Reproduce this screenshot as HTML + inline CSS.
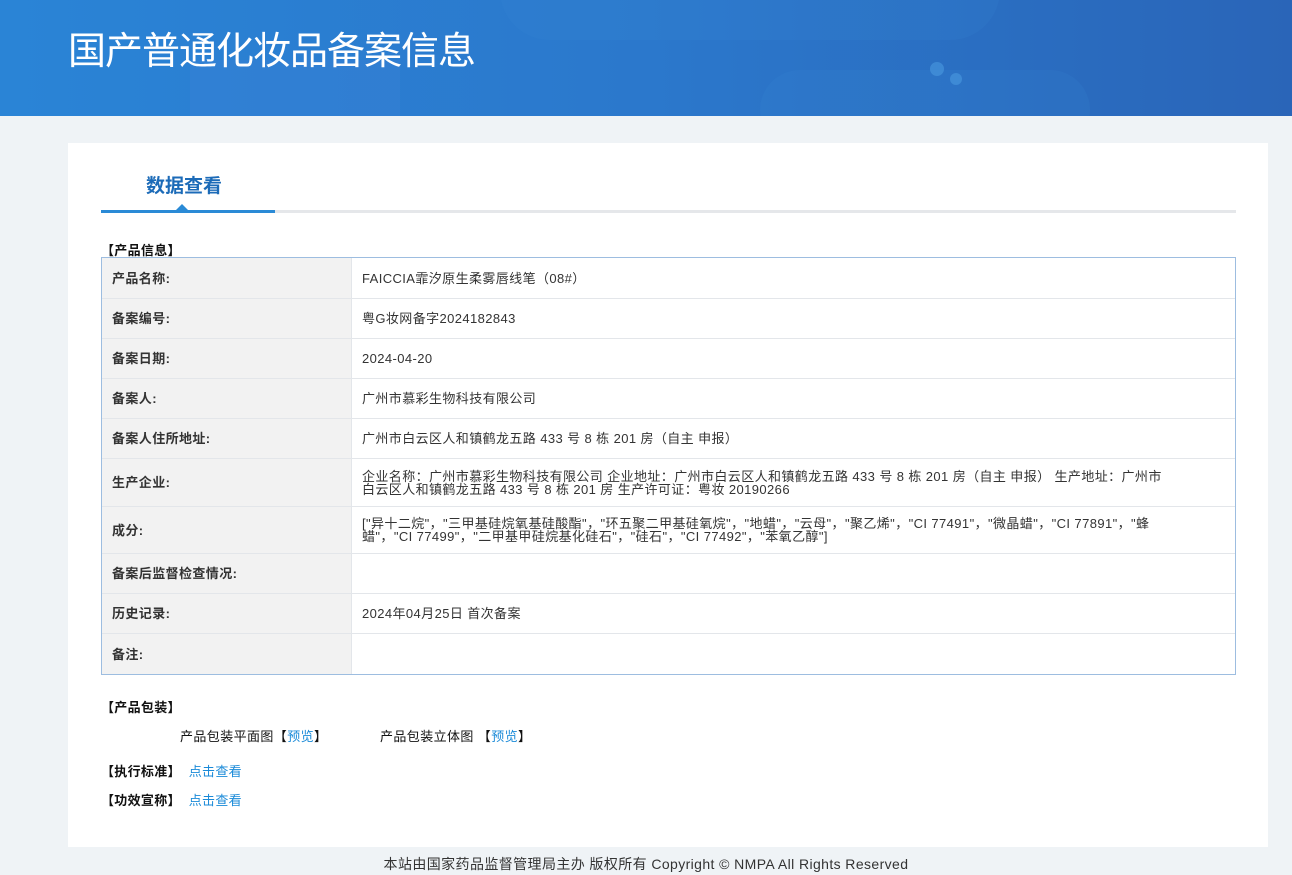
<!DOCTYPE html>
<html><head><meta charset="utf-8"><style>
*{margin:0;padding:0;box-sizing:border-box}
body{width:1292px;height:875px;background:#eff3f6;font-family:"Liberation Sans","Noto Sans CJK SC",sans-serif;font-size:13px;color:#333;position:relative;overflow:hidden}
.ban{position:absolute;left:0;top:0;width:1292px;height:116px;background:linear-gradient(90deg,#2a84d6 0%,#2b78cc 50%,#2a65b8 100%);overflow:hidden}
.ban h1{position:absolute;left:68px;top:20px;font-size:38px;font-weight:normal;color:#fff;font-family:"Noto Sans CJK SC",sans-serif;letter-spacing:-1px}
.card{position:absolute;left:68px;top:143px;width:1200px;height:704px;background:#fff}
.tab{position:absolute;left:78px;top:28px;font-size:19px;font-weight:bold;color:#1c6bb8}
.line{position:absolute;left:33px;top:67px;width:1135px;height:3px;background:#e5e7ea}
.line b{position:absolute;left:0;top:0;width:174px;height:3px;background:#2a8ad6}
.tri{position:absolute;left:108px;top:61px;width:0;height:0;border-left:6px solid transparent;border-right:6px solid transparent;border-bottom:6px solid #2a8ad6}
.sec{position:absolute;font-weight:bold;color:#111;font-size:13px;letter-spacing:.3px}
table{position:absolute;left:33px;top:114px;width:1135px;border-collapse:separate;border-spacing:0;border:1px solid #9dbde0}
td{border-bottom:1px solid #e3e6ea;padding:0 10px;font-size:13px;line-height:13px;letter-spacing:.4px}
tr:last-child td{border-bottom:none}
td.l{width:250px;background:#f2f2f2;font-weight:bold;color:#333;border-right:1px solid #e3e6ea}
a{color:#1a8ad8;text-decoration:none}
.foot{position:absolute;top:854px;width:1292px;text-align:center;font-size:14px;color:#333;letter-spacing:.4px}
.t{position:absolute;color:#111;letter-spacing:.4px}
</style></head><body>
<div class="ban">
<div style="position:absolute;left:190px;top:60px;width:210px;height:80px;background:#3b82d8;opacity:.35"></div>
<div style="position:absolute;left:500px;top:-60px;width:500px;height:100px;border-radius:50px;background:#3a8ad8;opacity:.15"></div>
<div style="position:absolute;left:760px;top:70px;width:330px;height:80px;border-radius:40px;background:#3a8ad8;opacity:.15"></div>
<div style="position:absolute;left:930px;top:62px;width:14px;height:14px;border-radius:7px;background:#4a9ae0;opacity:.6"></div>
<div style="position:absolute;left:950px;top:73px;width:12px;height:12px;border-radius:6px;background:#4a9ae0;opacity:.6"></div>
<h1>国产普通化妆品备案信息</h1></div>
<div class="card">
<div class="tab">数据查看</div>
<div class="tri"></div>
<div class="line"><b></b></div>
<div class="sec" style="left:33px;top:97px">【产品信息】</div>
<table>
<tr style="height:41px"><td class="l">产品名称:</td><td>FAICCIA霏汐原生柔雾唇线笔（08#）</td></tr>
<tr style="height:40px"><td class="l">备案编号:</td><td>粤G妆网备字2024182843</td></tr>
<tr style="height:40px"><td class="l">备案日期:</td><td>2024-04-20</td></tr>
<tr style="height:40px"><td class="l">备案人:</td><td>广州市慕彩生物科技有限公司</td></tr>
<tr style="height:40px"><td class="l">备案人住所地址:</td><td>广州市白云区人和镇鹤龙五路 433 号 8 栋 201 房（自主 申报）</td></tr>
<tr style="height:48px"><td class="l">生产企业:</td><td style="padding-right:60px">企业名称：广州市慕彩生物科技有限公司 企业地址：广州市白云区人和镇鹤龙五路 433 号 8 栋 201 房（自主 申报） 生产地址：广州市白云区人和镇鹤龙五路 433 号 8 栋 201 房 生产许可证：粤妆 20190266</td></tr>
<tr style="height:47px"><td class="l">成分:</td><td style="padding-right:60px">["异十二烷"，"三甲基硅烷氧基硅酸酯"，"环五聚二甲基硅氧烷"，"地蜡"，"云母"，"聚乙烯"，"CI 77491"，"微晶蜡"，"CI 77891"，"蜂蜡"，"CI 77499"，"二甲基甲硅烷基化硅石"，"硅石"，"CI 77492"，"苯氧乙醇"]</td></tr>
<tr style="height:40px"><td class="l">备案后监督检查情况:</td><td></td></tr>
<tr style="height:40px"><td class="l">历史记录:</td><td>2024年04月25日 首次备案</td></tr>
<tr style="height:40px"><td class="l">备注:</td><td></td></tr>
</table>
<div class="sec" style="left:33px;top:554px">【产品包装】</div>
<div class="t" style="left:112px;top:583px">产品包装平面图【<a>预览</a>】</div>
<div class="t" style="left:312px;top:583px">产品包装立体图 【<a>预览</a>】</div>
<div class="sec" style="left:33px;top:618px">【执行标准】 <a style="font-weight:normal;margin-left:4px">点击查看</a></div>
<div class="sec" style="left:33px;top:647px">【功效宣称】 <a style="font-weight:normal;margin-left:4px">点击查看</a></div>
</div>
<div class="foot">本站由国家药品监督管理局主办 版权所有 Copyright © NMPA All Rights Reserved</div>
</body></html>
